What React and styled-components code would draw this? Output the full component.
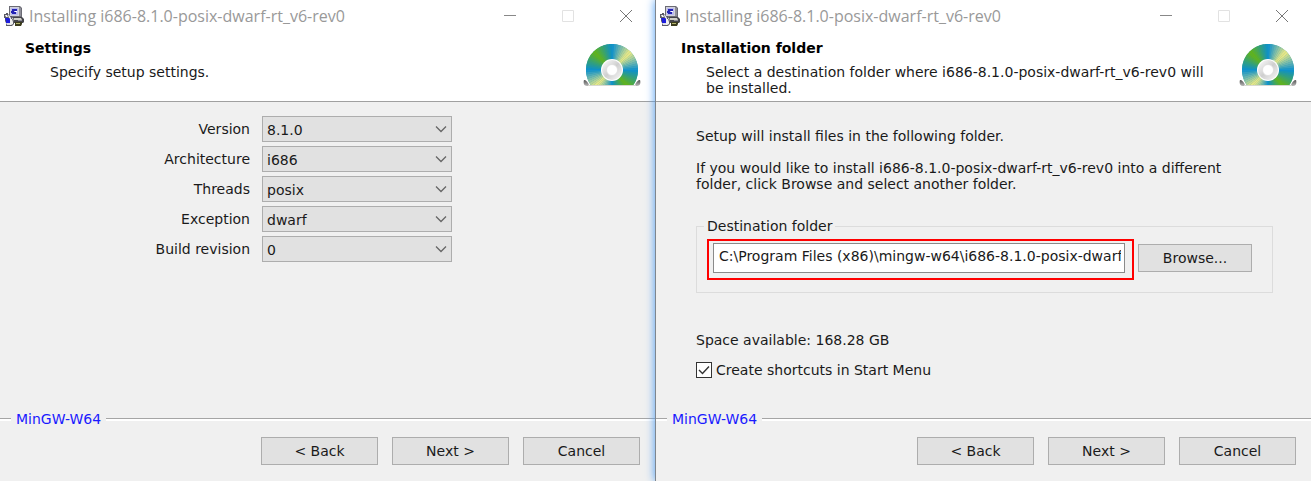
import { useId, useState } from 'react';
import styled, { createGlobalStyle } from 'styled-components';

const GlobalStyle = createGlobalStyle`
    * {
        box-sizing: border-box;
    }

    body {
        margin: 0;
        background-color: #f0f0f0;
        color: #1a1a1a;
        font-family: Verdana, 'DejaVu Sans', sans-serif;
        font-size: 14px;
        line-height: 16px;
    }

    button, input, select {
        font: inherit;
        color: inherit;
    }
`;

const Desktop = styled.main`
    min-height: 100vh;
    display: grid;
    grid-template-columns: 655fr 656fr;
`;

const Window = styled.section`
    display: flex;
    flex-direction: column;
    min-width: 0;
    background-color: #f0f0f0;

    & + & {
        z-index: 1;
        border-left: 1px solid #7f868e;
        box-shadow: 0 0 9px #4a9cf5;
    }
`;

const TitleBar = styled.div`
    height: 32px;
    display: flex;
    align-items: center;
    padding-left: 4px;
    background-color: white;
`;

const TitleText = styled.h1`
    flex: 1;
    margin: 0 0 0 5px;
    color: #999;
    font-family: 'Segoe UI', 'Open Sans', sans-serif;
    font-size: 16px;
    font-weight: 400;
    line-height: 20px;
    white-space: nowrap;
`;

const CaptionButton = styled.button`
    width: 58px;
    height: 32px;
    display: flex;
    align-items: center;
    justify-content: center;
    padding: 0;
    border: none;
    background: none;

    &:hover {
        background-color: #e5e5e5;
    }
`;

const Header = styled.header`
    height: 70px;
    display: flex;
    justify-content: space-between;
    padding: 8px 14px 0 25px;
    border-bottom: 1px solid #a0a0a0;
    background-color: white;
`;

const HeaderTitle = styled.h2`
    margin: 0;
    color: black;
    font-size: 14px;
    font-weight: 700;
    line-height: 16px;
`;

const HeaderText = styled.p`
    max-width: 510px;
    margin: 8px 0 0 25px;
`;

const Disc = styled.svg`
    flex: none;
    margin-top: 4px;
`;

const Settings = styled.div`
    flex: 1;
    display: flex;
    flex-direction: column;
    gap: 4px;
    padding: 14px 0;
`;

const SettingRow = styled.div`
    display: flex;
    align-items: center;
    gap: 12px;
`;

const SettingLabel = styled.label`
    width: 250px;
    text-align: right;
`;

const SelectBox = styled.div`
    display: grid;
    align-items: center;
    width: 190px;

    & > * {
        grid-area: 1 / 1;
    }
`;

const Select = styled.select`
    width: 100%;
    height: 26px;
    padding: 2px 24px 0 4px;
    appearance: none;
    border: 1px solid #adadad;
    border-radius: 0;
    background-color: #e1e1e1;
`;

const Chevron = styled.svg`
    justify-self: end;
    margin-right: 5px;
    pointer-events: none;
`;

const Folder = styled.div`
    flex: 1;
    padding: 26px 38px 24px 40px;
`;

const Paragraph = styled.p`
    max-width: 560px;
    margin: 0 0 16px;
`;

const Group = styled.fieldset`
    display: flex;
    align-items: flex-start;
    gap: 4px;
    min-width: 0;
    margin: 26px 0 39px;
    padding: 5px 20px 12px 10px;
    border: 1px solid #dcdcdc;
`;

const Legend = styled.legend`
    margin-left: -3px;
    padding: 0 3px;
`;

const Highlight = styled.div`
    flex: 1;
    min-width: 0;
    display: flex;
    padding: 2px 7px 5px 4px;
    border: 2px solid #f00;
`;

const PathInput = styled.input`
    width: 100%;
    height: 30px;
    padding: 0 3px 5px 5px;
    border: 1px solid #8a8a8a;
    border-radius: 0;
    background-color: white;
`;

const Button = styled.button`
    width: ${props => props.$width || 117}px;
    height: 28px;
    padding: 0;
    border: 1px solid #adadad;
    border-radius: 0;
    background-color: #e1e1e1;

    &:hover {
        border-color: #0078d7;
        background-color: #e5f1fb;
    }
`;

const BrowseButton = styled(Button)`
    margin-top: 5px;
`;

const CheckRow = styled.div`
    display: flex;
    align-items: center;
    gap: 4px;
    margin-top: 14px;
`;

const CheckBox = styled.span`
    display: grid;
    width: 16px;
    height: 16px;

    & > * {
        grid-area: 1 / 1;
    }
`;

const CheckInput = styled.input`
    width: 16px;
    height: 16px;
    margin: 0;
    appearance: none;
    border: 1px solid #333;
    background-color: white;

    &:not(:checked) + svg {
        display: none;
    }
`;

const CheckMark = styled.svg`
    pointer-events: none;
`;

const Brand = styled.div`
    display: flex;
    align-items: center;
    gap: 5px;
    color: #1a1aff;

    &::before,
    &::after {
        content: '';
        height: 2px;
        border-top: 1px solid #a5a5a5;
        background-color: white;
    }

    &::before {
        width: 11px;
    }

    &::after {
        flex: 1;
    }
`;

const Footer = styled.footer`
    display: flex;
    justify-content: flex-end;
    gap: 14px;
    padding: 10px 15px 16px;
`;

const wedges = [
    '#0b8fce', '#f0ea85', '#0b8fce', '#66b512', '#0b8fce', '#f0ea85', '#0b8fce', '#66b512',
];

// Angular colour of the disc, interpolated between the eight stops
function discColor(angle) {
    const position = (angle / 45) % 8;
    const index = Math.floor(position);
    const t = position - index;
    const parse = hex => [1, 3, 5].map(i => parseInt(hex.slice(i, i + 2), 16));
    const from = parse(wedges[index]);
    const to = parse(wedges[(index + 1) % 8]);
    return `rgb(${from.map((c, i) => Math.round(c + (to[i] - c) * t)).join(',')})`;
}

function DiscIcon() {
    const id = useId();
    const slices = Array.from({ length: 72 }, (_, i) => i * 5);
    const point = angle => {
        const rad = (angle * Math.PI) / 180;
        return `${29 + 26 * Math.sin(rad)} ${26 - 26 * Math.cos(rad)}`;
    };

    return (
        <Disc width="58" height="43" viewBox="0 0 58 43" aria-hidden="true">
            <defs>
                <clipPath id={`${id}cut`}>
                    <rect width="58" height="41" />
                </clipPath>
                <linearGradient id={`${id}hub`} x1="0" y1="0" x2="1" y2="1">
                    <stop offset="0" stopColor="#fff" />
                    <stop offset="0.5" stopColor="#cfcfcf" />
                    <stop offset="1" stopColor="#fafafa" />
                </linearGradient>
                <linearGradient id={`${id}foot`} x1="0" y1="0" x2="0" y2="1">
                    <stop offset="0" stopColor="#555" />
                    <stop offset="1" stopColor="#bbb" />
                </linearGradient>
            </defs>
            <path d="M1 36C3 36 5 38 6 41L52 41C53 38 55 36 57 36C58 39 57 42 54 42L4 42C1 42 0 39 1 36Z" fill={`url(#${id}foot)`} />
            <path d="M5 41H53V42H5Z" fill="#d8d8d0" />
            <g clipPath={`url(#${id}cut)`}>
                <circle cx="29" cy="26" r="26" fill="#2a9a9a" />
                {slices.map(angle => (
                    <path
                        key={angle}
                        d={`M29 26L${point(angle)}A26 26 0 0 1 ${point(angle + 5.6)}Z`}
                        fill={discColor(angle + 2)}
                    />
                ))}
                <circle cx="29" cy="26" r="11" fill="#fff" />
                <circle cx="29" cy="26" r="10" fill={`url(#${id}hub)`} />
                <circle cx="29" cy="26" r="5.5" fill="#fff" stroke="#ddd" strokeWidth="0.8" />
            </g>
        </Disc>
    );
}

function SetupIcon() {
    return (
        <svg width="20" height="20" viewBox="0 0 20 20" aria-hidden="true">
            <path d="M5 0H16L18 2V11L16 12H6L5 10Z" fill="#6b6b74" />
            <path d="M6 1H15V10H6Z" fill="#d2d2da" />
            <path d="M15 1L17 2V10L15 10Z" fill="#8f8f99" />
            <path d="M7 2H14V9H7Z" fill="#b9b9ee" />
            <path d="M8 3H13V5H10V6H12V8H8V7H7V5H8Z" fill="#2424b4" />
            <path d="M11 5H13V6H11Z" fill="#fff" />
            <path d="M9 11H18L20 13V16L19 17H10Z" fill="#44444a" />
            <path d="M10 12H17L18 14H10Z" fill="#d0d0c8" />
            <path d="M14 14H18V15H14Z" fill="#8c8c94" />
            <path d="M11 16H18V18L17 20H11Z" fill="#3c3c1c" />
            <path d="M12 17H16V18H12Z" fill="#b4b46c" />
            <path d="M0 8H2V7H4V8L6 10H8V12L10 15V18L8 20H2V17L1 15V12H0Z" fill="#5a5a64" />
            <path d="M1 9H3L4 11H2Z" fill="#f4f4f4" />
            <path d="M4 9H5L7 12V14L5 12Z" fill="#e8e8f0" />
            <path d="M1 12H5L6 13V17H2V15Z" fill="#1c1cdc" />
            <path d="M6 13H8L9 16V18L7 19H6Z" fill="#f0f0f0" />
            <path d="M2 17H6V19H3Z" fill="#dcdce8" />
        </svg>
    );
}

function InstallerWindow({ title, text, children }) {
    return (
        <Window>
            <TitleBar>
                <SetupIcon />
                <TitleText>Installing i686-8.1.0-posix-dwarf-rt_v6-rev0</TitleText>
                <CaptionButton aria-label="Minimize">
                    <svg width="14" height="14" viewBox="0 0 14 14">
                        <path d="M1 6.5H13" stroke="#888" />
                    </svg>
                </CaptionButton>
                <CaptionButton aria-label="Maximize" disabled>
                    <svg width="14" height="14" viewBox="0 0 14 14">
                        <path d="M1.5 1.5H12.5V12.5H1.5Z" fill="none" stroke="#e2e2e2" />
                    </svg>
                </CaptionButton>
                <CaptionButton aria-label="Close">
                    <svg width="14" height="14" viewBox="0 0 14 14">
                        <path d="M1 1L13 13M13 1L1 13" stroke="#777" />
                    </svg>
                </CaptionButton>
            </TitleBar>
            <Header>
                <div>
                    <HeaderTitle>{title}</HeaderTitle>
                    <HeaderText>{text}</HeaderText>
                </div>
                <DiscIcon />
            </Header>
            {children}
            <Brand>MinGW-W64</Brand>
            <Footer>
                <Button>&lt; Back</Button>
                <Button>Next &gt;</Button>
                <Button>Cancel</Button>
            </Footer>
        </Window>
    );
}

function Setting({ label, value }) {
    const id = useId();

    return (
        <SettingRow>
            <SettingLabel htmlFor={id}>{label}</SettingLabel>
            <SelectBox>
                <Select id={id} defaultValue={value}>
                    <option>{value}</option>
                </Select>
                <Chevron width="12" height="8" viewBox="0 0 12 8" aria-hidden="true">
                    <path d="M1 1.5L6 6.5L11 1.5" fill="none" stroke="#666" strokeWidth="1.3" />
                </Chevron>
            </SelectBox>
        </SettingRow>
    );
}

export default function App() {
    const [folder, setFolder] = useState(
        'C:\\Program Files (x86)\\mingw-w64\\i686-8.1.0-posix-dwarf-rt_v6-rev0'
    );

    return (
        <>
            <GlobalStyle />
            <Desktop>
                <InstallerWindow title="Settings" text="Specify setup settings.">
                    <Settings>
                        <Setting label="Version" value="8.1.0" />
                        <Setting label="Architecture" value="i686" />
                        <Setting label="Threads" value="posix" />
                        <Setting label="Exception" value="dwarf" />
                        <Setting label="Build revision" value="0" />
                    </Settings>
                </InstallerWindow>
                <InstallerWindow
                    title="Installation folder"
                    text="Select a destination folder where i686-8.1.0-posix-dwarf-rt_v6-rev0 will be installed."
                >
                    <Folder>
                        <Paragraph>Setup will install files in the following folder.</Paragraph>
                        <Paragraph>
                            If you would like to install i686-8.1.0-posix-dwarf-rt_v6-rev0 into a different
                            folder, click Browse and select another folder.
                        </Paragraph>
                        <Group>
                            <Legend>Destination folder</Legend>
                            <Highlight>
                                <PathInput
                                    aria-label="Destination folder"
                                    value={folder}
                                    onChange={e => setFolder(e.target.value)}
                                />
                            </Highlight>
                            <BrowseButton $width={114}>Browse...</BrowseButton>
                        </Group>
                        <div>Space available: 168.28 GB</div>
                        <CheckRow>
                            <CheckBox>
                                <CheckInput type="checkbox" id="shortcuts" defaultChecked />
                                <CheckMark width="16" height="16" viewBox="0 0 16 16" aria-hidden="true">
                                    <path d="M3 8L6.5 11.5L13 4.5" fill="none" stroke="#333" strokeWidth="1.4" />
                                </CheckMark>
                            </CheckBox>
                            <label htmlFor="shortcuts">Create shortcuts in Start Menu</label>
                        </CheckRow>
                    </Folder>
                </InstallerWindow>
            </Desktop>
        </>
    );
}
